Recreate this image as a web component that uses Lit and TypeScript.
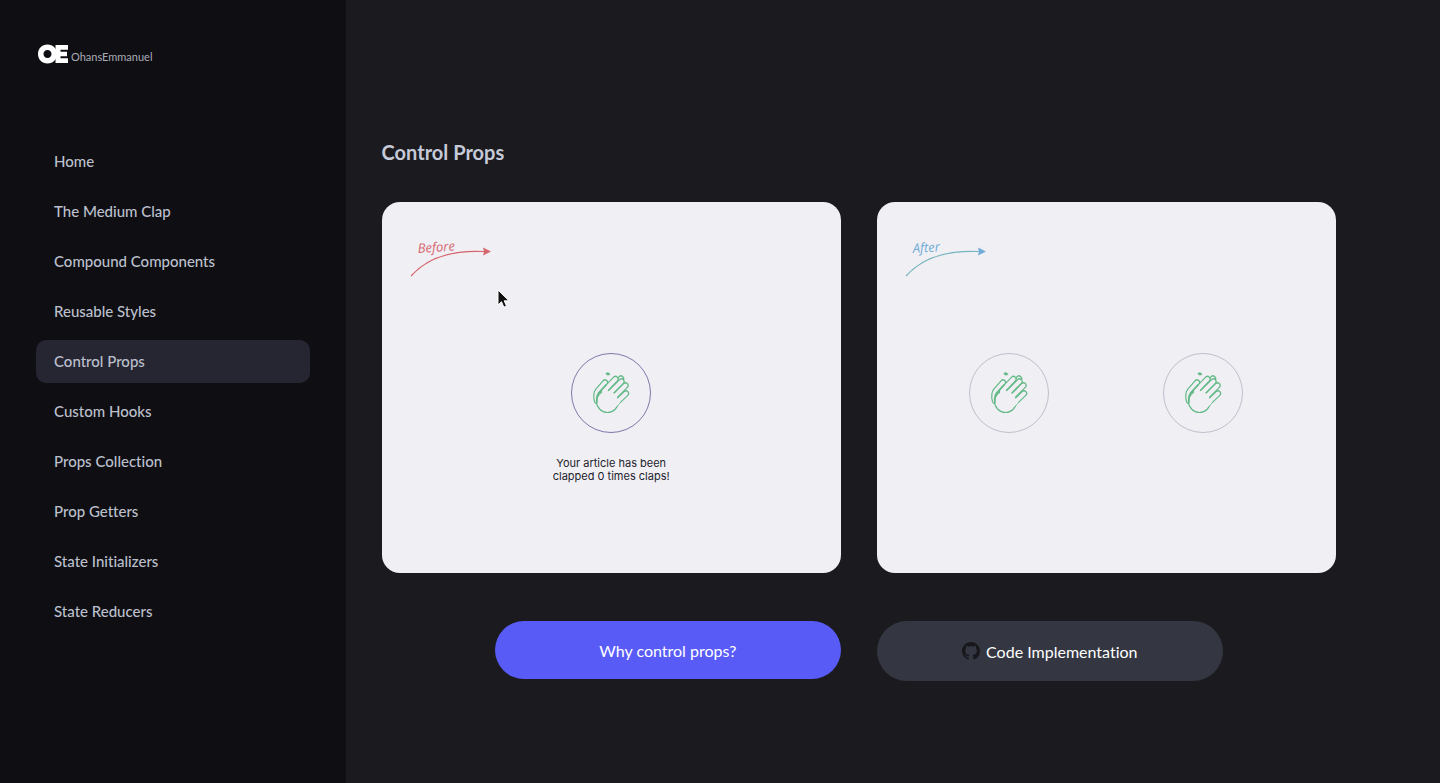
import { LitElement, html, css, svg } from "lit";
import { customElement, property } from "lit/decorators.js";

const NAV_ITEMS = [
  "Home",
  "The Medium Clap",
  "Compound Components",
  "Reusable Styles",
  "Control Props",
  "Custom Hooks",
  "Props Collection",
  "Prop Getters",
  "State Initializers",
  "State Reducers",
];

// Finger axes, from the palm to the fingertip.
const FINGERS = [
  "M18 25L29.500 13",
  "M21 30L35.500 15.500",
  "M25 34L39.500 19.500",
  "M28 39L40 27.500",
];

@customElement("clap-button")
class ClapButton extends LitElement {
  @property({ type: Boolean }) active = false;

  static styles = css`
    :host {
      display: block;
    }
    .clap {
      display: flex;
      align-items: center;
      justify-content: center;
      box-sizing: border-box;
      width: 80px;
      height: 80px;
      padding: 0;
      border: 1px solid #bfc0cc;
      border-radius: 50%;
      background: none;
    }
    .clap.active {
      border-color: #7e78a8;
    }
    .icon {
      width: 50px;
      height: 54px;
      fill: none;
      stroke-linecap: round;
      stroke-linejoin: round;
    }
    .solid {
      fill: #62b986;
    }
    .edge {
      stroke: #62b986;
      stroke-width: 6.4;
    }
    .skin {
      stroke: #f0eff4;
      stroke-width: 4;
    }
    .palm {
      fill: #f0eff4;
    }
    .crease {
      stroke: #62b986;
      stroke-width: 1.8;
    }
  `;

  render() {
    return html`<button class="clap ${this.active ? "active" : ""}" aria-label="Clap">
      <svg class="icon" viewBox="0 0 50 54" aria-hidden="true">
        <path class="solid" d="M19.500 7l2.500-.8 2.500 1.800-2 1.500-2-.5z" />
        <path class="edge" d="M19 16.500L12 24.500C10 27 10 31 11 35" />
        <path class="skin" d="M19 16.500L12 24.500C10 27 10 31 11 35" />
        <path class="edge" d="M31 18L35 12.500" />
        <path class="skin" d="M31 18L35 12.500" />
        <circle class="solid" cx="21.500" cy="35.500" r="11.500" />
        ${FINGERS.map((d) => svg`<path class="edge" d=${d} /><path class="skin" d=${d} />`)}
        <circle class="palm" cx="21.500" cy="35.500" r="10.400" />
        <path class="skin" d="M17 29L20 24M29 39L32 36" />
        <path class="crease" d="M20 19L13 26.500C11 29 10.500 32 10.800 36" />
      </svg>
    </button>`;
  }
}

@customElement("arrow-label")
class ArrowLabel extends LitElement {
  @property() label = "";
  @property() tone = "red";

  static styles = css`
    :host {
      display: block;
    }
    .arrow {
      display: block;
      width: 82px;
      height: 40px;
      overflow: visible;
      fill: currentColor;
    }
    .red {
      color: #d5666d;
    }
    .blue {
      color: #70acd6;
    }
    .curve {
      fill: none;
      stroke: currentColor;
      stroke-width: 1.2;
    }
    .blue .curve {
      stroke: #79b5c0;
    }
    .word {
      font: italic 13px "Open Sans", sans-serif;
    }
  `;

  render() {
    return html`<svg class="arrow ${this.tone}" viewBox="0 0 82 40">
      ${svg`<text class="word" x="8" y="15" transform="rotate(-4 8 15)">${this.label}</text>`}
      <path class="curve" d="M1 38C17 20 42 12 74 13.500" />
      <path d="M73 9.500l8 4-8 4 1-4z" />
    </svg>`;
  }
}

@customElement("app-root")
class AppRoot extends LitElement {
  static styles = css`
    :host {
      display: grid;
      grid-template-columns: 24% 1fr;
      min-height: 100vh;
      background: #1a1a1f;
      color: #c6cad8;
      font-family: Lato, "Open Sans", sans-serif;
      font-variant-ligatures: none;
    }
    .sidebar {
      box-sizing: border-box;
      padding: 40px 36px;
      background: #0f0e13;
    }
    .brand {
      display: flex;
      align-items: flex-end;
      gap: 3px;
      height: 26px;
      padding-left: 2px;
      margin-bottom: 74px;
      color: #a9abb7;
      font-size: 11px;
      line-height: 18px;
      text-decoration: none;
    }
    .monogram {
      width: 30px;
      height: 20px;
      padding-bottom: 2px;
      fill: #fff;
    }
    .nav {
      display: grid;
      gap: 7px;
    }
    .link {
      padding: 0 18px;
      border-radius: 10px;
      color: #bcc0cd;
      font-size: 15px;
      font-weight: 500;
      line-height: 43px;
      text-decoration: none;
    }
    .link.current {
      background: #262532;
    }
    .main {
      padding: 138px 104px 40px 36px;
    }
    .title {
      margin: 0 0 36px;
      font-size: 20px;
      font-weight: 700;
      line-height: 28px;
    }
    .columns {
      display: grid;
      grid-template-columns: 1fr 1fr;
      gap: 48px 36px;
      align-items: start;
    }
    .card {
      position: relative;
      box-sizing: border-box;
      min-height: 371px;
      padding: 36px 28px;
      border-radius: 18px;
      background: #f0eff4;
      color: #22222c;
    }
    .stage {
      display: flex;
      flex-direction: column;
      align-items: center;
      gap: 24px;
      padding-top: 75px;
    }
    .pair {
      flex-direction: row;
      justify-content: center;
      gap: 114px;
    }
    .note {
      margin: 0;
      font: 11px/13px Inter, sans-serif;
      text-align: center;
    }
    .pointer {
      position: absolute;
      left: 115px;
      top: 87px;
      width: 14px;
      height: 20px;
    }
    .action {
      box-sizing: border-box;
      display: flex;
      align-items: center;
      justify-content: center;
      gap: 6px;
      width: 346px;
      max-width: 100%;
      height: 58px;
      border: 0;
      border-radius: 30px;
      background: #595bf7;
      color: #fff;
      font-family: inherit;
      font-size: 16px;
      text-decoration: none;
    }
    .primary {
      justify-self: end;
    }
    .secondary {
      height: 60px;
      background: #343742;
    }
    .github {
      width: 18px;
      height: 18px;
      fill: #17171c;
    }
  `;

  render() {
    return html`
      <aside class="sidebar">
        <a class="brand" href="#home">
          <svg class="monogram" viewBox="0 0 30 20" aria-hidden="true">
            <path fill-rule="evenodd" d="M9.500.5C15 .5 19 4.500 19 10s-4 9.500-9.500 9.500S0 15.500 0 10 4 .5 9.500.5zm0 5.500C7 6 5.500 7.700 5.500 10s1.500 4 4 4 4-1.700 4-4-1.500-4-4-4z" />
            <path d="M17.500 1H30v4.800h-7.500v2h6.500v4.400h-6.500v2H30V19H17.500z" />
          </svg>
          <span>OhansEmmanuel</span>
        </a>
        <nav class="nav">
          ${NAV_ITEMS.map(
            (item) => html`<a
              class="link ${item === "Control Props" ? "current" : ""}"
              href="#${item.toLowerCase().replaceAll(" ", "-")}"
              >${item}</a
            >`
          )}
        </nav>
      </aside>
      <main class="main">
        <h1 class="title">Control Props</h1>
        <div class="columns">
          <section class="card">
            <arrow-label label="Before" tone="red"></arrow-label>
            <div class="stage">
              <clap-button active></clap-button>
              <p class="note">Your article has been<br />clapped 0 times claps!</p>
            </div>
            <svg class="pointer" viewBox="0 0 14 20" aria-hidden="true">
              <path fill="#111" stroke="#fff" d="M1 1v15l3.500-3.300 2.300 5.500 2.700-1.200-2.300-5.200h4.800z" />
            </svg>
          </section>
          <section class="card">
            <arrow-label label="After" tone="blue"></arrow-label>
            <div class="stage pair">
              <clap-button></clap-button>
              <clap-button></clap-button>
            </div>
          </section>
          <button class="action primary">Why control props?</button>
          <a class="action secondary" href="#code">
            <svg class="github" viewBox="0 0 16 16" aria-hidden="true">
              <path
                d="M8 0C3.580 0 0 3.580 0 8c0 3.540 2.290 6.530 5.470 7.590.4.070.55-.17.55-.38 0-.19-.01-.82-.01-1.490-2.010.37-2.530-.49-2.690-.94-.09-.23-.48-.94-.82-1.130-.28-.15-.68-.52-.01-.53.63-.01 1.080.58 1.230.82.72 1.210 1.870.87 2.330.66.07-.52.28-.87.51-1.070-1.780-.2-3.640-.89-3.640-3.950 0-.87.31-1.590.82-2.150-.08-.2-.36-1.020.08-2.120 0 0 .67-.21 2.200.82.64-.18 1.320-.27 2-.27s1.360.09 2 .27c1.530-1.040 2.200-.82 2.200-.82.44 1.100.16 1.920.08 2.120.51.56.82 1.270.82 2.150 0 3.070-1.870 3.750-3.650 3.950.29.25.54.73.54 1.480 0 1.070-.01 1.930-.01 2.200 0 .21.15.46.55.38A8.010 8.010 0 0 0 16 8c0-4.420-3.580-8-8-8z"
              />
            </svg>
            <span>Code Implementation</span>
          </a>
        </div>
      </main>
    `;
  }
}
